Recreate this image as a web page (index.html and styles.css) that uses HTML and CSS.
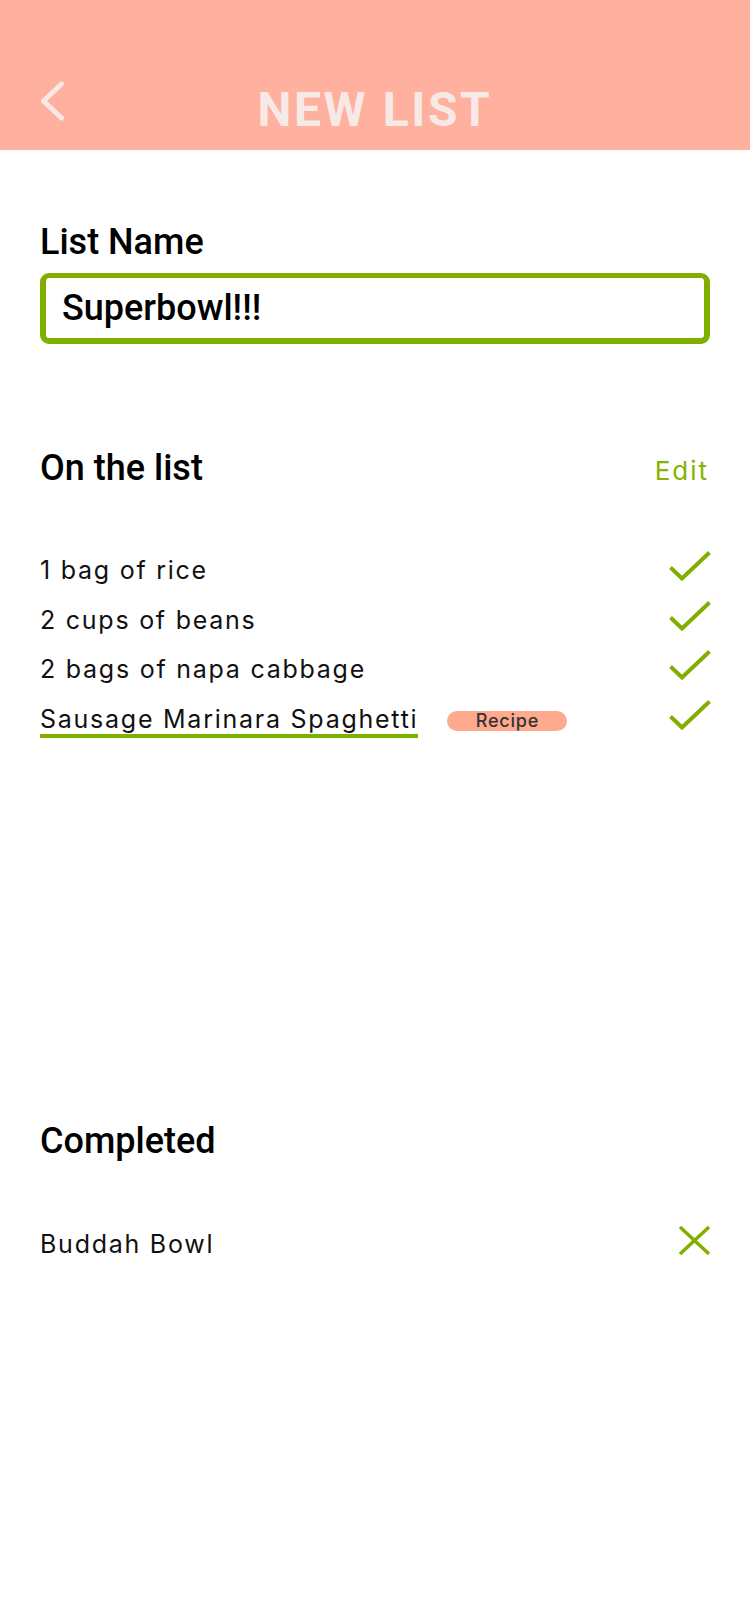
FILE: index.html
```html
<!DOCTYPE html>
<html lang="en">
<head>
<meta charset="utf-8">
<title>New List</title>
<link rel="stylesheet" href="styles.css">
</head>
<body>
<header class="topbar">
  <button class="back" aria-label="Back">
    <svg width="26" height="42" viewBox="0 0 26 42"><polyline points="21.5,4 3.5,21 21.5,38" fill="none" stroke="#F7EAE6" stroke-width="5" stroke-linecap="round" stroke-linejoin="round"/></svg>
  </button>
  <h1 class="title">NEW LIST</h1>
  <span class="spacer"></span>
</header>
<main class="content">
  <h2 class="label">List Name</h2>
  <div class="name-input">Superbowl!!!</div>

  <div class="section-head">
    <h2 class="label">On the list</h2>
    <a class="edit">Edit</a>
  </div>

  <ul class="items">
    <li class="item"><span class="item-name">1 bag of rice</span>
      <svg class="check" width="42" height="30" viewBox="0 0 42 30"><polyline points="1.5,16.5 13,27.5 40.5,1.5" fill="none" stroke="#81AF00" stroke-width="4"/></svg></li>
    <li class="item"><span class="item-name">2 cups of beans</span>
      <svg class="check" width="42" height="30" viewBox="0 0 42 30"><polyline points="1.5,16.5 13,27.5 40.5,1.5" fill="none" stroke="#81AF00" stroke-width="4"/></svg></li>
    <li class="item"><span class="item-name">2 bags of napa cabbage</span>
      <svg class="check" width="42" height="30" viewBox="0 0 42 30"><polyline points="1.5,16.5 13,27.5 40.5,1.5" fill="none" stroke="#81AF00" stroke-width="4"/></svg></li>
    <li class="item"><span class="item-name"><span class="recipe-link">Sausage Marinara Spaghetti</span><span class="badge">Recipe</span></span>
      <svg class="check" width="42" height="30" viewBox="0 0 42 30"><polyline points="1.5,16.5 13,27.5 40.5,1.5" fill="none" stroke="#81AF00" stroke-width="4"/></svg></li>
  </ul>

  <h2 class="label completed-head">Completed</h2>
  <ul class="items done">
    <li class="item"><span class="item-name">Buddah Bowl</span>
      <svg class="remove" width="33" height="31" viewBox="0 0 33 31"><path d="M2 2 L31 29 M31 2 L2 29" fill="none" stroke="#81AF00" stroke-width="3.5"/></svg></li>
  </ul>
</main>
</body>
</html>
```
FILE: styles.css
```css
* { box-sizing: border-box; }
html, body { margin: 0; padding: 0; background: #fff; }
body { font-family: Roboto, "Liberation Sans", sans-serif; color: #000; width: 750px; }

.topbar {
  height: 150px;
  background: #FFB09E;
  display: grid;
  grid-template-columns: 1fr auto 1fr;
  align-items: start;
  padding: 80px 40px 0 40px;
}
.back {
  justify-self: start;
  background: none; border: 0; padding: 0; margin: 0;
  width: 26px; height: 42px; display: block;
}
.back svg { display: block; }
.title {
  margin: 6px 0 0 0;
  font-family: Roboto, sans-serif;
  font-weight: 700;
  font-size: 48px;
  line-height: 48px;
  letter-spacing: 2.6px;
  color: #F7EAE6;
}

.content { padding: 0 40px; }

.label {
  margin: 0;
  font-family: Roboto, sans-serif;
  font-weight: 500;
  font-size: 36px;
  line-height: 40px;
  color: #000;
}
.content > .label:first-child { margin-top: 72px; }

.name-input {
  margin-top: 11px;
  height: 71px;
  border: 5px solid #81AF00;
  border-width: 5px 6px 6px 6px;
  border-radius: 9px;
  padding-left: 16px;
  display: flex;
  align-items: center;
  font-family: Roboto, sans-serif;
  font-weight: 500;
  font-size: 36px;
  color: #000;
}

.section-head {
  margin-top: 104px;
  display: flex;
  justify-content: space-between;
  align-items: baseline;
}
.edit {
  font-family: Inter, sans-serif;
  font-weight: 400;
  font-size: 26px;
  color: #84B300;
  letter-spacing: 2px;
  margin-right: 1px;
}

.items {
  list-style: none;
  margin: 58px 0 0 0;
  padding: 0;
}
.item {
  height: 49.5px;
  display: flex;
  justify-content: space-between;
  align-items: flex-start;
}
.item-name {
  font-family: Inter, sans-serif;
  font-weight: 400;
  font-size: 25px;
  line-height: 49px;
  color: #111;
  letter-spacing: 1.75px;
}
.check { display: block; margin-top: 5px; margin-right: -1px; }

.recipe-link {
  display: inline-block;
  line-height: 30px;
  border-bottom: 4px solid #81AF00;
}
.badge {
  display: inline-block;
  margin-left: 29px;
  width: 120px;
  height: 20px;
  border-radius: 10px;
  background: #FFA98D;
  text-align: center;
  font-family: Inter, sans-serif;
  font-weight: 500;
  font-size: 18px;
  line-height: 20px;
  letter-spacing: 0.8px;
  color: #333;
  vertical-align: 1px;
}

.completed-head { margin-top: 377px; }
.done { margin-top: 59px; }
.remove { display: block; margin-top: 5px; margin-right: -1px; }
```
